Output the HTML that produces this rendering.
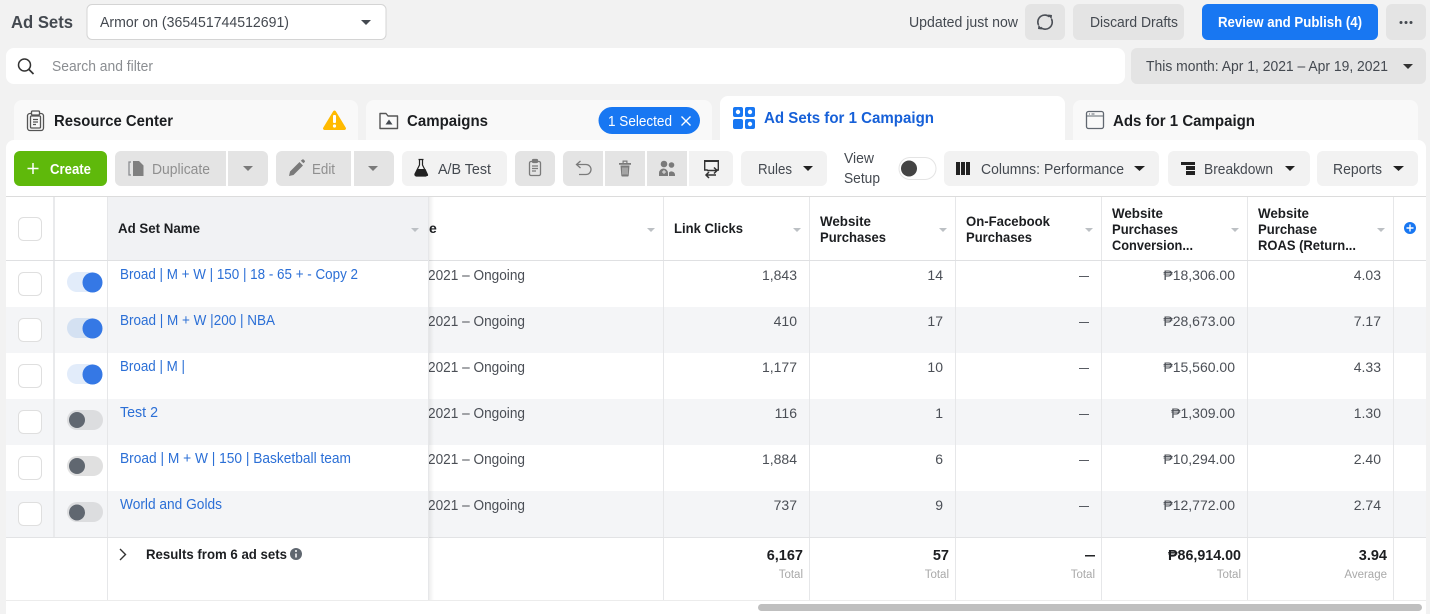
<!DOCTYPE html>
<html><head><meta charset="utf-8"><title>Ad Sets</title>
<style>
html,body{margin:0;padding:0;background:#f2f2f2;width:1430px;height:614px;overflow:hidden}
svg{display:block}
text{font-family:"Liberation Sans",sans-serif;font-size:14.5px;fill:#4b4f56}
.b{font-weight:bold;fill:#1c1e21}
.h{font-weight:bold;fill:#1c1e21;font-size:14px}
.l{fill:#2b6fd6}
.d{fill:#4b4f56}
.e{text-anchor:end}
.s{font-size:11.5px;fill:#a9a9a9;text-anchor:end}
.t{font-weight:bold;fill:#1c1e21;text-anchor:end}
.nums text{font-size:14px}
</style></head><body>
<svg width="1430" height="614" viewBox="0 0 1430 614" xmlns="http://www.w3.org/2000/svg">
<defs>
<linearGradient id="sh" x1="0" x2="1" y1="0" y2="0"><stop offset="0" stop-color="#000" stop-opacity=".07"/><stop offset="1" stop-color="#000" stop-opacity="0"/></linearGradient>
</defs>
<rect width="1430" height="614" fill="#f2f2f2"/>

<!-- top bar -->
<text x="11" y="28" class="b" style="font-size:17.5px;fill:#444950" textLength="62" lengthAdjust="spacingAndGlyphs">Ad Sets</text>
<rect x="87" y="4.500" width="299" height="35" rx="5" fill="#fff" stroke="#d4d4d4"/>
<text x="100" y="27" textLength="189" lengthAdjust="spacingAndGlyphs" style="fill:#444950">Armor on (365451744512691)</text>
<path d="M361 20h10l-5 5z" fill="#444950"/>
<text x="909" y="27" textLength="109" lengthAdjust="spacingAndGlyphs" style="fill:#444950">Updated just now</text>
<rect x="1025" y="4" width="40" height="36" rx="6" fill="#e4e4e4"/>
<g fill="none" stroke="#4b4f56" stroke-width="1.600"><path d="M1038.500 25A7 7 0 0 1 1049.500 16.800"/><path d="M1051.500 19A7 7 0 0 1 1040.500 27.300"/></g>
<path d="M1048 14.500l4 .5-.5 4.500zM1042 29.500l-4-.5.500-4.500z" fill="#4b4f56"/>
<rect x="1073" y="4" width="111" height="36" rx="6" fill="#e4e4e4"/>
<text x="1090" y="27" textLength="88" lengthAdjust="spacingAndGlyphs" style="fill:#444950">Discard Drafts</text>
<rect x="1202" y="4" width="176" height="36" rx="6" fill="#1877f2"/>
<text x="1218" y="27" textLength="144" lengthAdjust="spacingAndGlyphs" style="fill:#fff;font-weight:bold">Review and Publish (4)</text>
<rect x="1386" y="4" width="40" height="36" rx="6" fill="#e4e4e4"/>
<g fill="#444950"><circle cx="1401" cy="22.500" r="1.500"/><circle cx="1406" cy="22.500" r="1.500"/><circle cx="1411" cy="22.500" r="1.500"/></g>

<!-- search row -->
<rect x="6" y="48" width="1119" height="36" rx="8" fill="#fff"/>
<circle cx="24.500" cy="65" r="6" fill="none" stroke="#333" stroke-width="1.500"/><path d="M29 69.500l4.500 4.500" stroke="#333" stroke-width="1.700"/>
<text x="52" y="71" textLength="101" lengthAdjust="spacingAndGlyphs" style="fill:#8a8d91">Search and filter</text>
<rect x="1131" y="48" width="295" height="36" rx="6" fill="#e4e4e4"/>
<text x="1146" y="71" textLength="242" lengthAdjust="spacingAndGlyphs" style="fill:#444950">This month: Apr 1, 2021 – Apr 19, 2021</text>
<path d="M1403 64h10l-5 5z" fill="#333"/>

<!-- tabs -->
<rect x="14" y="100" width="344" height="50" rx="8" fill="#f9f9f9"/>
<rect x="366" y="100" width="346" height="50" rx="8" fill="#f9f9f9"/>
<rect x="1073" y="100" width="345" height="50" rx="8" fill="#f9f9f9"/>
<rect x="720" y="96" width="345" height="54" rx="8" fill="#fff"/>

<g fill="none" stroke="#555" stroke-width="1.300"><rect x="27.500" y="113.500" width="16" height="17" rx="2.500"/><rect x="30.500" y="116" width="10" height="12" rx="1"/><rect x="31.500" y="111" width="8" height="4" rx="1" fill="#f9f9f9"/><path d="M33 119.500h5M33 122h5M33 124.500h3"/></g>
<text x="54" y="126" class="b" style="font-size:16px" textLength="119" lengthAdjust="spacingAndGlyphs">Resource Center</text>
<path d="M334.500 110.500a1.500 1.500 0 0 1 1.300.8l10 16.500a1.500 1.500 0 0 1-1.300 2.200h-20a1.500 1.500 0 0 1-1.300-2.200l10-16.500a1.500 1.500 0 0 1 1.300-.8z" fill="#ffba00"/>
<rect x="333" y="115" width="3" height="8" rx="1" fill="#fff"/><circle cx="334.500" cy="126" r="1.600" fill="#fff"/>

<path d="M380 113.500h6l2 2.500h9.500v12.500h-17.500z" fill="none" stroke="#555" stroke-width="1.400" stroke-linejoin="round"/>
<path d="M389 119.500l3.500 5h-7z" fill="#444950"/>
<text x="407" y="126" class="b" style="font-size:16px" textLength="81" lengthAdjust="spacingAndGlyphs">Campaigns</text>
<rect x="598.500" y="107" width="101.500" height="27" rx="13.500" fill="#1877f2"/>
<text x="608" y="126" textLength="64" lengthAdjust="spacingAndGlyphs" style="fill:#fff">1 Selected</text>
<path d="M681.500 116.500l9 9M690.500 116.500l-9 9" stroke="#fff" stroke-width="1.300"/>

<g fill="#1877f2"><rect x="733" y="107" width="10" height="10" rx="2"/><rect x="745" y="107" width="10" height="10" rx="2"/><rect x="733" y="119" width="10" height="10" rx="2"/><rect x="745" y="119" width="10" height="10" rx="2"/></g>
<g fill="#fff"><circle cx="738" cy="112" r="2.200"/><circle cx="750" cy="112" r="2.200"/><circle cx="750" cy="124" r="2.200"/></g>
<text x="764" y="123" style="font-size:16px;font-weight:bold;fill:#1660d8" textLength="170" lengthAdjust="spacingAndGlyphs">Ad Sets for 1 Campaign</text>

<rect x="1086.500" y="111.500" width="17" height="17" rx="2" fill="none" stroke="#606770" stroke-width="1.300"/><path d="M1087 116h16" stroke="#606770"/><path d="M1089 114h1M1091.500 114h3" stroke="#606770"/>
<text x="1113" y="126" class="b" style="font-size:16px" textLength="142" lengthAdjust="spacingAndGlyphs">Ads for 1 Campaign</text>

<!-- main panel -->
<path d="M6 148a8 8 0 0 1 8-8h706v10h345v-10h353a8 8 0 0 1 8 8v466H6z" fill="#fff"/>
<rect x="720" y="130" width="345" height="20" fill="#fff"/>

<!-- toolbar -->
<rect x="14" y="151" width="93" height="35" rx="6" fill="#5fb90b"/>
<path d="M33 163v11M27.500 168.500h11" stroke="#fff" stroke-width="1.500"/>
<text x="50" y="174" textLength="41" lengthAdjust="spacingAndGlyphs" style="fill:#fff;font-weight:bold">Create</text>

<path d="M121 151h105v35H121a6 6 0 0 1-6-6v-23a6 6 0 0 1 6-6z" fill="#e4e4e4"/>
<path d="M228 151h34a6 6 0 0 1 6 6v23a6 6 0 0 1-6 6h-34z" fill="#e4e4e4"/>
<path d="M131 162h-2v13h2" fill="none" stroke="#8a8d91" stroke-width="1.300"/>
<path d="M133 161h6l4.500 4.500v10.500h-10.500z" fill="#808080"/>
<text x="152" y="174" textLength="58" lengthAdjust="spacingAndGlyphs" style="fill:#8f8f8f">Duplicate</text>
<path d="M243 166h10l-5 5z" fill="#7a7a7a"/>

<path d="M282 151h69v35h-69a6 6 0 0 1-6-6v-23a6 6 0 0 1 6-6z" fill="#e4e4e4"/>
<path d="M354 151h34a6 6 0 0 1 6 6v23a6 6 0 0 1-6 6h-34z" fill="#e4e4e4"/>
<path d="M289 176l1-4.500 9.500-9.500 3.500 3.500-9.500 9.500zM300.800 160.700l1.500-1.200a1 1 0 0 1 1.300 0l1.100 1.100a1 1 0 0 1 0 1.400l-1.300 1.300z" fill="#7a7a7a"/>
<text x="312" y="174" textLength="23" lengthAdjust="spacingAndGlyphs" style="fill:#8f8f8f">Edit</text>
<path d="M368 166h10l-5 5z" fill="#7a7a7a"/>

<rect x="402" y="151" width="105" height="35" rx="6" fill="#f2f2f2"/>
<path d="M418.500 159.500h5M419.500 160v5l-4.500 9a1.500 1.500 0 0 0 1.300 2h9.400a1.500 1.500 0 0 0 1.300-2l-4.500-9v-5" fill="none" stroke="#222" stroke-width="1.200"/>
<path d="M417.500 169h8l2.500 5.500a1 1 0 0 1-1 1.500h-11a1 1 0 0 1-1-1.500z" fill="#222"/>
<text x="438" y="174" textLength="53" lengthAdjust="spacingAndGlyphs" style="fill:#444950">A/B Test</text>

<rect x="515" y="151" width="40" height="35" rx="6" fill="#e4e4e4"/>
<g fill="none" stroke="#7a7a7a" stroke-width="1.300"><rect x="529.500" y="161.500" width="11" height="14" rx="1.500"/><rect x="532.500" y="159.500" width="5" height="3" rx="1" fill="#7a7a7a"/><path d="M532 166h6M532 168.500h6M532 171h4"/></g>

<path d="M569 151h34v35h-34a6 6 0 0 1-6-6v-23a6 6 0 0 1 6-6z" fill="#e4e4e4"/>
<rect x="605" y="151" width="40" height="35" fill="#e4e4e4"/>
<rect x="647" y="151" width="40" height="35" fill="#e4e4e4"/>
<path d="M689 151h38a6 6 0 0 1 6 6v23a6 6 0 0 1-6 6h-38z" fill="#f2f2f2"/>
<path d="M577 164.500h9a5 5 0 0 1 5 5v0a5 5 0 0 1-5 5h-7" fill="none" stroke="#7a7a7a" stroke-width="1.300"/>
<path d="M580.500 161l-4 3.500 4 3.500" fill="none" stroke="#7a7a7a" stroke-width="1.300"/>
<path d="M619 163h12v1.800h-12zM622.500 160.500h5v2.500h-1.200v-1.300h-2.600v1.300h-1.200zM620.500 165.500h9l-.8 10a1 1 0 0 1-1 1h-5.400a1 1 0 0 1-1-1z" fill="#7a7a7a"/>
<path d="M623 167.500v7M625 167.500v7M627 167.500v7" stroke="#e4e4e4" stroke-width=".8"/>
<g fill="#7a7a7a"><circle cx="664" cy="164" r="3.300"/><circle cx="671.500" cy="165" r="2.800"/><path d="M659 176v-3a4.500 4.500 0 0 1 9 0v3zM669 176v-3.500a3.500 3.500 0 0 1 6 2.500v1z"/></g>
<path d="M662 172h4M664 170v4" stroke="#e4e4e4" stroke-width="1"/>
<path d="M704 160h15v2h-15z" fill="#333"/>
<path d="M704.700 161v9h3M718.300 161v9h-2" fill="none" stroke="#333" stroke-width="1.400"/>
<g fill="none" stroke="#333" stroke-width="1.500"><path d="M707 170.500h10M714 167.500l3 3-3 3"/><path d="M716 175h-10M709 172l-3 3 3 3"/></g>

<rect x="741" y="151" width="86" height="35" rx="6" fill="#f2f2f2"/>
<text x="758" y="174" textLength="34" lengthAdjust="spacingAndGlyphs" style="fill:#444950">Rules</text>
<path d="M803 166h10l-5 5z" fill="#222"/>
<text x="844" y="163" textLength="30" lengthAdjust="spacingAndGlyphs" style="fill:#444950">View</text>
<text x="844" y="183" textLength="36" lengthAdjust="spacingAndGlyphs" style="fill:#444950">Setup</text>
<rect x="899" y="157.500" width="37" height="22" rx="11" fill="#fff" stroke="#e4e4e4"/>
<circle cx="909" cy="168.500" r="8" fill="#444"/>

<rect x="944" y="151" width="215" height="35" rx="6" fill="#f2f2f2"/>
<g fill="#222"><rect x="956" y="162" width="4" height="13"/><rect x="961" y="162" width="4" height="13"/><rect x="966" y="162" width="4" height="13"/></g>
<text x="981" y="174" textLength="143" lengthAdjust="spacingAndGlyphs" style="fill:#444950">Columns: Performance</text>
<path d="M1134 166h11l-5.500 5z" fill="#222"/>

<rect x="1168" y="151" width="142" height="35" rx="6" fill="#f2f2f2"/>
<g fill="#222"><rect x="1181" y="162" width="14" height="3"/><rect x="1186" y="166" width="9" height="4"/><rect x="1186" y="171" width="9" height="4"/></g>
<text x="1204" y="174" textLength="69" lengthAdjust="spacingAndGlyphs" style="fill:#444950">Breakdown</text>
<path d="M1285 166h10l-5 5z" fill="#222"/>

<rect x="1317" y="151" width="101" height="35" rx="6" fill="#f2f2f2"/>
<text x="1333" y="174" textLength="49" lengthAdjust="spacingAndGlyphs" style="fill:#444950">Reports</text>
<path d="M1393 166h11l-5.500 5z" fill="#222"/>

<!-- table rows -->
<rect x="6" y="307" width="1420" height="46" fill="#f4f5f7"/>
<rect x="6" y="399" width="1420" height="46" fill="#f4f5f7"/>
<rect x="6" y="491" width="1420" height="46" fill="#f4f5f7"/>
<rect x="108" y="197" width="321" height="63" fill="#f1f2f4"/>

<!-- lines -->
<g stroke="#e6e7e9" stroke-width="1">
<path d="M663.500 197v403M809.500 197v403M955.500 197v403M1101.500 197v403M1247.500 197v403M1393.500 197v403"/>
<path d="M107.500 197v403"/>
</g>
<path d="M54 197v340" stroke="#e9eaec" stroke-width="2"/>
<path d="M6 196.500h1420" stroke="#dcdcdc"/>
<path d="M6 260.500h1420" stroke="#dfe0e2"/>
<path d="M6 537.500h1420" stroke="#e2e3e5"/>
<path d="M6 600.500h1420" stroke="#ececec"/>

<!-- header -->
<rect x="18.500" y="217.500" width="23" height="23" rx="5" fill="#fff" stroke="#dfdfdf"/>
<text x="118" y="233" class="h" textLength="82" lengthAdjust="spacingAndGlyphs">Ad Set Name</text>
<text x="429" y="233" class="h">e</text>
<g fill="#bcc0c4"><path d="M411 228h8l-4 4zM647 228h8l-4 4zM793 228h8l-4 4zM939 228h8l-4 4zM1085 228h8l-4 4zM1231 228h8l-4 4zM1377 228h8l-4 4z"/></g>
<text x="674" y="233" class="h" textLength="69" lengthAdjust="spacingAndGlyphs">Link Clicks</text>
<text x="820" y="226" class="h" textLength="51" lengthAdjust="spacingAndGlyphs">Website</text>
<text x="820" y="242" class="h" textLength="66" lengthAdjust="spacingAndGlyphs">Purchases</text>
<text x="966" y="226" class="h" textLength="84" lengthAdjust="spacingAndGlyphs">On-Facebook</text>
<text x="966" y="242" class="h" textLength="66" lengthAdjust="spacingAndGlyphs">Purchases</text>
<text x="1112" y="218" class="h" textLength="51" lengthAdjust="spacingAndGlyphs">Website</text>
<text x="1112" y="234" class="h" textLength="66" lengthAdjust="spacingAndGlyphs">Purchases</text>
<text x="1112" y="250" class="h" textLength="81" lengthAdjust="spacingAndGlyphs">Conversion...</text>
<text x="1258" y="218" class="h" textLength="51" lengthAdjust="spacingAndGlyphs">Website</text>
<text x="1258" y="234" class="h" textLength="59" lengthAdjust="spacingAndGlyphs">Purchase</text>
<text x="1258" y="250" class="h" textLength="98" lengthAdjust="spacingAndGlyphs">ROAS (Return...</text>
<circle cx="1410" cy="228" r="6" fill="#1877f2"/><path d="M1410 224.500v7M1406.500 228h7" stroke="#fff" stroke-width="1.400"/>

<!-- checkboxes -->
<g fill="#fff" stroke="#dfdfdf">
<rect x="18.500" y="272.500" width="23" height="23" rx="5"/>
<rect x="18.500" y="318.500" width="23" height="23" rx="5"/>
<rect x="18.500" y="364.500" width="23" height="23" rx="5"/>
<rect x="18.500" y="410.500" width="23" height="23" rx="5"/>
<rect x="18.500" y="456.500" width="23" height="23" rx="5"/>
<rect x="18.500" y="502.500" width="23" height="23" rx="5"/>
</g>

<!-- toggles -->
<rect x="67" y="272" width="35" height="20" rx="10" fill="#e2ecfa"/><circle cx="92.500" cy="282.500" r="10" fill="#3578e5"/>
<rect x="67" y="318" width="35" height="20" rx="10" fill="#d4e1f2"/><circle cx="92.500" cy="328.500" r="10" fill="#3578e5"/>
<rect x="67" y="364" width="35" height="20" rx="10" fill="#e2ecfa"/><circle cx="92.500" cy="374.500" r="10" fill="#3578e5"/>
<rect x="67" y="410" width="36" height="20" rx="10" fill="#dcdddf"/><circle cx="77" cy="420" r="8" fill="#606770"/>
<rect x="67" y="456" width="36" height="20" rx="10" fill="#e0e0e0"/><circle cx="77" cy="466" r="8" fill="#606770"/>
<rect x="67" y="502" width="36" height="20" rx="10" fill="#dcdddf"/><circle cx="77" cy="512.500" r="8" fill="#606770"/>

<!-- names -->
<text x="120" y="279" class="l" textLength="238" lengthAdjust="spacingAndGlyphs">Broad | M + W | 150 | 18 - 65 + - Copy 2</text>
<text x="120" y="325" class="l" textLength="155" lengthAdjust="spacingAndGlyphs">Broad | M + W |200 | NBA</text>
<text x="120" y="371" class="l" textLength="65" lengthAdjust="spacingAndGlyphs">Broad | M |</text>
<text x="120" y="417" class="l" textLength="38" lengthAdjust="spacingAndGlyphs">Test 2</text>
<text x="120" y="463" class="l" textLength="231" lengthAdjust="spacingAndGlyphs">Broad | M + W | 150 | Basketball team</text>
<text x="120" y="509" class="l" textLength="102" lengthAdjust="spacingAndGlyphs">World and Golds</text>

<!-- dates -->
<text x="428" y="280" class="d" textLength="97" lengthAdjust="spacingAndGlyphs">2021 – Ongoing</text>
<text x="428" y="326" class="d" textLength="97" lengthAdjust="spacingAndGlyphs">2021 – Ongoing</text>
<text x="428" y="372" class="d" textLength="97" lengthAdjust="spacingAndGlyphs">2021 – Ongoing</text>
<text x="428" y="418" class="d" textLength="97" lengthAdjust="spacingAndGlyphs">2021 – Ongoing</text>
<text x="428" y="464" class="d" textLength="97" lengthAdjust="spacingAndGlyphs">2021 – Ongoing</text>
<text x="428" y="510" class="d" textLength="97" lengthAdjust="spacingAndGlyphs">2021 – Ongoing</text>

<!-- frozen edge drawn over the clipped dates -->
<rect x="429" y="197" width="5" height="403" fill="url(#sh)"/>
<path d="M428.500 197v403" stroke="#e6e7e9"/>

<!-- data -->
<g class="nums">
<text x="797" y="280" class="d e">1,843</text><text x="943" y="280" class="d e">14</text><text x="1089" y="280" class="d e" textLength="10" lengthAdjust="spacingAndGlyphs">—</text><text x="1235" y="280" class="d e">₱18,306.00</text><text x="1381" y="280" class="d e">4.03</text>
<text x="797" y="326" class="d e">410</text><text x="943" y="326" class="d e">17</text><text x="1089" y="326" class="d e" textLength="10" lengthAdjust="spacingAndGlyphs">—</text><text x="1235" y="326" class="d e">₱28,673.00</text><text x="1381" y="326" class="d e">7.17</text>
<text x="797" y="372" class="d e">1,177</text><text x="943" y="372" class="d e">10</text><text x="1089" y="372" class="d e" textLength="10" lengthAdjust="spacingAndGlyphs">—</text><text x="1235" y="372" class="d e">₱15,560.00</text><text x="1381" y="372" class="d e">4.33</text>
<text x="797" y="418" class="d e">116</text><text x="943" y="418" class="d e">1</text><text x="1089" y="418" class="d e" textLength="10" lengthAdjust="spacingAndGlyphs">—</text><text x="1235" y="418" class="d e">₱1,309.00</text><text x="1381" y="418" class="d e">1.30</text>
<text x="797" y="464" class="d e">1,884</text><text x="943" y="464" class="d e">6</text><text x="1089" y="464" class="d e" textLength="10" lengthAdjust="spacingAndGlyphs">—</text><text x="1235" y="464" class="d e">₱10,294.00</text><text x="1381" y="464" class="d e">2.40</text>
<text x="797" y="510" class="d e">737</text><text x="943" y="510" class="d e">9</text><text x="1089" y="510" class="d e" textLength="10" lengthAdjust="spacingAndGlyphs">—</text><text x="1235" y="510" class="d e">₱12,772.00</text><text x="1381" y="510" class="d e">2.74</text>
</g>

<!-- totals -->
<path d="M120 549l5.500 5.500-5.500 5.500" fill="none" stroke="#333" stroke-width="1.400"/>
<text x="146" y="559" class="b" textLength="141" lengthAdjust="spacingAndGlyphs" style="font-size:14px">Results from 6 ad sets</text>
<circle cx="296" cy="554" r="6" fill="#606770"/><path d="M296 553.500v4" stroke="#fff" stroke-width="1.500"/><circle cx="296" cy="551" r="1" fill="#fff"/>
<text x="803" y="560" class="t">6,167</text><text x="803" y="578" class="s">Total</text>
<text x="949" y="560" class="t">57</text><text x="949" y="578" class="s">Total</text>
<text x="1095" y="560" class="t" textLength="10" lengthAdjust="spacingAndGlyphs">—</text><text x="1095" y="578" class="s">Total</text>
<text x="1241" y="560" class="t" textLength="73" lengthAdjust="spacingAndGlyphs">₱86,914.00</text><text x="1241" y="578" class="s">Total</text>
<text x="1387" y="560" class="t">3.94</text><text x="1387" y="578" class="s">Average</text>

<!-- scrollbar -->
<rect x="758" y="604" width="664" height="7" rx="3.500" fill="#bfbfbf"/>
</svg>
</body></html>
